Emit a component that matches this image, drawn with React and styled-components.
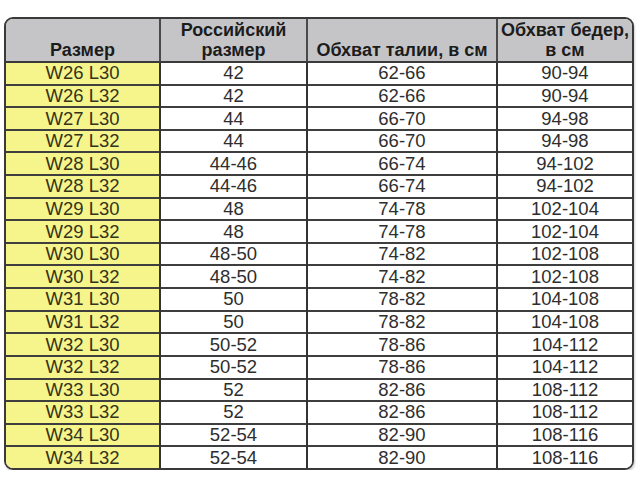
import React from "react";
import styled, { createGlobalStyle } from "styled-components";

const GlobalStyle = createGlobalStyle`
  body {
    margin: 0;
    background: #ffffff;
    font-family: "Liberation Sans", Arial, sans-serif;
  }
`;

const rows = [
  ["W26 L30", "42", "62-66", "90-94"],
  ["W26 L32", "42", "62-66", "90-94"],
  ["W27 L30", "44", "66-70", "94-98"],
  ["W27 L32", "44", "66-70", "94-98"],
  ["W28 L30", "44-46", "66-74", "94-102"],
  ["W28 L32", "44-46", "66-74", "94-102"],
  ["W29 L30", "48", "74-78", "102-104"],
  ["W29 L32", "48", "74-78", "102-104"],
  ["W30 L30", "48-50", "74-82", "102-108"],
  ["W30 L32", "48-50", "74-82", "102-108"],
  ["W31 L30", "50", "78-82", "104-108"],
  ["W31 L32", "50", "78-82", "104-108"],
  ["W32 L30", "50-52", "78-86", "104-112"],
  ["W32 L32", "50-52", "78-86", "104-112"],
  ["W33 L30", "52", "82-86", "108-112"],
  ["W33 L32", "52", "82-86", "108-112"],
  ["W34 L30", "52-54", "82-90", "108-116"],
  ["W34 L32", "52-54", "82-90", "108-116"],
];

const Page = styled.div`
  padding: 17px 0 0 4px;
`;

const Frame = styled.div`
  width: 630px;
  height: 453px;
  box-sizing: border-box;
  border: 2px solid #3a3a3a;
  border-radius: 9px;
  overflow: hidden;
  box-shadow: 1px 2px 2px rgba(0, 0, 0, 0.18);
`;

const Table = styled.table`
  width: 100%;
  height: 100%;
  border-collapse: collapse;
  table-layout: fixed;
`;

const HeadCell = styled.th`
  height: 41px;
  padding: 0 0 1px;
  background: #c5c5c7;
  color: #1c1c1c;
  font-size: 18px;
  font-weight: 700;
  line-height: 20px;
  text-align: center;
  vertical-align: bottom;
  border-left: 2px solid #4a4a4a;
  border-bottom: 2px solid #3a3a3a;
  &:first-child {
    border-left: none;
  }
`;

const Cell = styled.td`
  padding: 0;
  background: ${(p) => (p.$size ? "#f6f58b" : "#ffffff")};
  color: ${(p) => (p.$size ? "#34331a" : "#2e2e2e")};
  font-size: 18.5px;
  line-height: 20px;
  text-align: center;
  vertical-align: middle;
  border-left: 2px solid #333333;
  border-top: 2px solid #3e3e3e;
  &:first-child {
    border-left: none;
  }
`;

const BodyRow = styled.tr`
  &:first-child td {
    border-top: none;
  }
`;

const App = () => {
  return (
    <Page>
      <GlobalStyle />
      <Frame>
        <Table>
          <colgroup>
            <col style={{ width: 154 }} />
            <col style={{ width: 147 }} />
            <col style={{ width: 190 }} />
            <col />
          </colgroup>
          <thead>
            <tr>
              <HeadCell>Размер</HeadCell>
              <HeadCell>
                Российский
                <br />
                размер
              </HeadCell>
              <HeadCell>Обхват талии, в см</HeadCell>
              <HeadCell>
                Обхват бедер,
                <br />в см
              </HeadCell>
            </tr>
          </thead>
          <tbody>
            {rows.map((r) => (
              <BodyRow key={r[0]}>
                <Cell $size>{r[0]}</Cell>
                <Cell>{r[1]}</Cell>
                <Cell>{r[2]}</Cell>
                <Cell>{r[3]}</Cell>
              </BodyRow>
            ))}
          </tbody>
        </Table>
      </Frame>
    </Page>
  );
};

export default App;
